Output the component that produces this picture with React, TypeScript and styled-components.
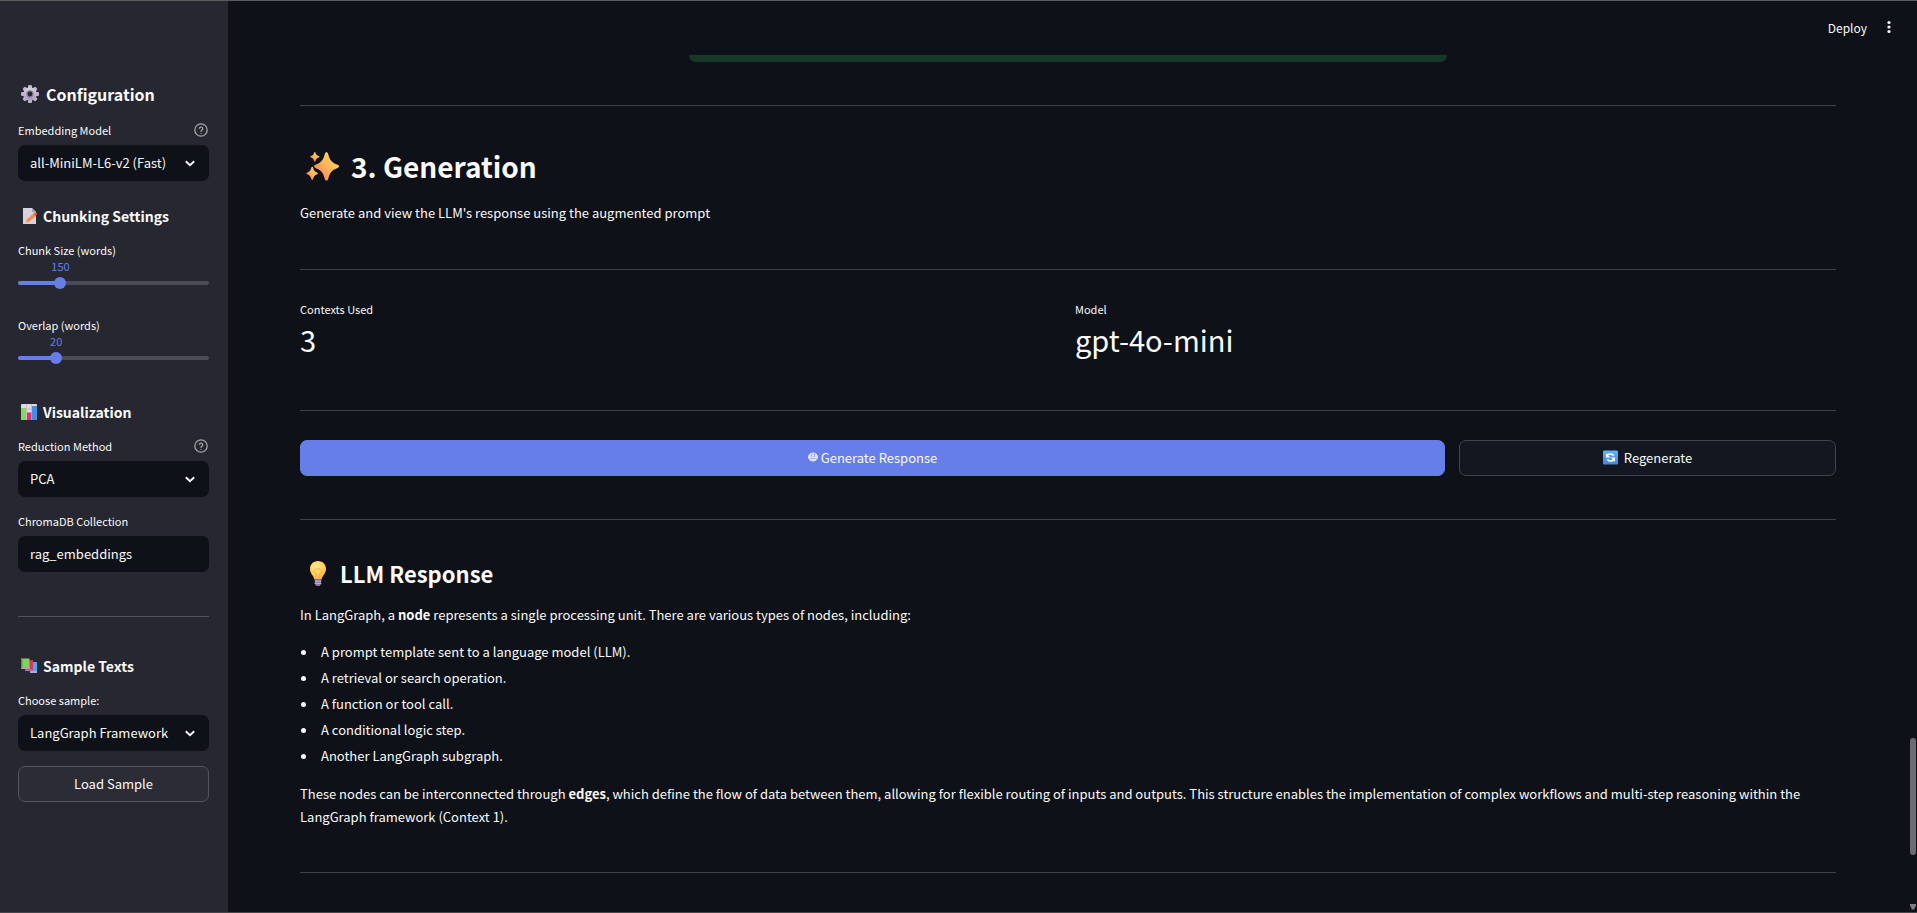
import React, { useState } from "react";
import styled, { createGlobalStyle } from "styled-components";

const GlobalStyle = createGlobalStyle`
  *, *::before, *::after { box-sizing: border-box; }
  body {
    margin: 0;
    background: #0e1117;
    color: #fafafa;
    font-family: "Noto Sans CJK SC", "Noto Sans", sans-serif;
    font-size: 13px;
    line-height: 23px;
  }
  button, input, select { font: inherit; color: inherit; }
  h1, h2, h3, p, ul { margin: 0; }
`;

const Page = styled.div`
  position: relative;
  display: flex;
  height: 100vh;
  overflow: hidden;
  border-top: 1px solid #5a5c5d;
  border-bottom: 1px solid #45454c;
`;

const Sidebar = styled.aside`
  flex: 0 0 228px;
  padding: 73px 19px 0 18px;
  background: #262730;
`;

const Main = styled.main`
  flex: 1;
  min-width: 0;
  display: flex;
  flex-direction: column;
`;

const Header = styled.header`
  flex: 0 0 54px;
  display: flex;
  justify-content: flex-end;
  align-items: center;
  gap: 17px;
  padding: 0 23px 2px 0;
`;

const BarButton = styled.button`
  display: flex;
  align-items: center;
  padding: 0;
  border: 0;
  background: none;
  font-size: 12px;
`;

const Content = styled.div`
  flex: 1;
  min-height: 0;
  padding: 0 81px 0 72px;
`;

const StatusEnd = styled.div`
  width: 758px;
  max-width: 100%;
  height: 7px;
  margin: 0 auto;
  border-radius: 0 0 7px 7px;
  background: #173928;
`;

const Divider = styled.hr<{ $top?: number; $bottom?: number }>`
  height: 1px;
  margin: ${(p) => p.$top ?? 43}px 0 ${(p) => p.$bottom ?? 29}px;
  border: 0;
  background: #3e4146;
`;

const SideDivider = styled(Divider)`
  background: #51525b;
`;

const Title = styled.h2`
  display: flex;
  align-items: center;
  gap: 12px;
  padding-left: 5px;
  font-size: 28px;
  font-weight: 600;
  line-height: 44px;
`;

const Subtitle = styled.h3`
  display: flex;
  align-items: center;
  gap: 9px;
  padding-left: 4px;
  font-size: 22px;
  font-weight: 600;
  line-height: 33px;
`;

const SideTitle = styled.h2<{ $large?: boolean }>`
  display: flex;
  align-items: center;
  gap: ${(p) => (p.$large ? 6 : 5)}px;
  margin-bottom: 5px;
  padding-left: 2px;
  font-size: ${(p) => (p.$large ? 16 : 14)}px;
  font-weight: 600;
  line-height: ${(p) => (p.$large ? 40 : 36)}px;
`;

const Intro = styled.p`
  margin-top: 13px;
`;

const Columns = styled.div`
  display: flex;
  gap: 14px;
`;

const Metric = styled.dl`
  flex: 1;
  margin: 0;
`;

const MetricLabel = styled.dt`
  font-size: 11px;
  line-height: 20px;
`;

const MetricValue = styled.dd`
  margin: 0;
  font-size: 29px;
  line-height: 40px;
`;

const Action = styled.button<{ $primary?: boolean; $share?: number }>`
  flex: ${(p) => (p.$share ? `1 1 calc(${p.$share}% - 14px)` : "none")};
  display: flex;
  justify-content: center;
  align-items: center;
  gap: ${(p) => (p.$primary ? 3 : 6)}px;
  width: 100%;
  height: 36px;
  padding: 0 0 2px;
  border: 1px solid ${(p) => (p.$primary ? "#667eea" : "#41444c")};
  border-radius: 7px;
  background: ${(p) => (p.$primary ? "#667eea" : "#13171f")};
`;

const SideAction = styled(Action)`
  border-color: #53545d;
  background: #2b2c36;
`;

const Bullets = styled.ul`
  padding: 0;
  margin: 13px 0;
  list-style: none;

  li {
    display: flex;
    align-items: center;
    gap: 15px;
    line-height: 26px;
  }
  li::before {
    content: "";
    width: 5px;
    height: 5px;
    margin-left: 1px;
    border-radius: 50%;
    background: #fafafa;
  }
`;

const Field = styled.div<{ $after?: number }>`
  margin-bottom: ${(p) => p.$after ?? 13}px;
`;

const LabelRow = styled.div<{ $compact?: boolean }>`
  display: flex;
  justify-content: space-between;
  align-items: center;
  height: ${(p) => (p.$compact ? 22 : 26)}px;
  padding-bottom: ${(p) => (p.$compact ? 0 : 4)}px;
  font-size: 11px;
  line-height: 22px;
`;

const HelpButton = styled.button`
  display: flex;
  padding: 0 1px 0 0;
  border: 0;
  background: none;
`;

const SelectBox = styled.div`
  display: grid;
  align-items: center;

  select, svg { grid-area: 1 / 1; }
  svg { justify-self: end; margin-right: 14px; pointer-events: none; }
`;

const Select = styled.select`
  appearance: none;
  width: 100%;
  height: 36px;
  padding: 0 30px 2px 12px;
  border: 0;
  border-radius: 7px;
  background: #0e1117;
`;

const TextInput = styled.input`
  width: 100%;
  height: 36px;
  padding: 0 12px 2px;
  border: 0;
  border-radius: 7px;
  background: #0e1117;
`;

const SliderValue = styled.output`
  display: block;
  width: max-content;
  height: 12px;
  transform: translateX(-50%);
  color: #667eea;
  font-size: 11px;
  line-height: 10px;
`;

const Rail = styled.div`
  display: grid;
  align-items: center;
  height: 12px;
  margin-top: 4px;

  > * { grid-area: 1 / 1; }
`;

const RailLine = styled.div`
  height: 4px;
  border-radius: 2px;
  background: #4b4c57;
  overflow: hidden;
`;

const RailFill = styled.div`
  height: 100%;
  background: #667eea;
`;

const Range = styled.input`
  appearance: none;
  width: calc(100% + 12px);
  height: 12px;
  margin: 0 -6px;
  background: none;

  &::-webkit-slider-thumb {
    appearance: none;
    width: 12px;
    height: 12px;
    border-radius: 50%;
    background: #667eea;
  }
`;

const ScrollThumb = styled.div`
  position: absolute;
  right: 1px;
  bottom: 57px;
  width: 6px;
  height: 117px;
  border-radius: 3px;
  background: #6b6c70;
`;

const ScrollArrow = styled.svg`
  position: absolute;
  right: 1px;
  bottom: 2px;
`;

const HelpIcon = () => (
  <svg width="14" height="14" viewBox="0 0 24 24" fill="none" stroke="#a3a4a9" strokeWidth="2.2" strokeLinecap="round" strokeLinejoin="round">
    <circle cx="12" cy="12" r="10.6" />
    <path d="M9.1 9a3 3 0 0 1 5.8 1c0 2-2.9 2.6-2.9 4.2M12 17.6v.1" />
  </svg>
);

const Chevron = () => (
  <svg width="10" height="7" viewBox="0 0 10 7" fill="none" stroke="#fafafa" strokeWidth="1.9">
    <path d="M.8 1.2 5 5.2 9.2 1.2" />
  </svg>
);

const Dots = () => (
  <svg width="10" height="14" viewBox="0 0 10 14" fill="#fafafa">
    <circle cx="5" cy="2.5" r="1.6" />
    <circle cx="5" cy="7" r="1.6" />
    <circle cx="5" cy="11.5" r="1.6" />
  </svg>
);

const Gear = () => (
  <svg width="20" height="20" viewBox="0 0 20 20">
    <defs>
      <linearGradient id="gear" x1="0" y1="0" x2="0" y2="1">
        <stop offset="0" stopColor="#d9d5e0" />
        <stop offset="1" stopColor="#a99bbd" />
      </linearGradient>
    </defs>
    <g fill="url(#gear)">
      {[0, 45, 90, 135].map((a) => (
        <rect key={a} x="8" y="1" width="4" height="18" rx="1.3" fill="#c0b6cd" transform={`rotate(${a} 10 10)`} />
      ))}
      <circle cx="10" cy="10" r="6.8" />
    </g>
    <circle cx="10" cy="10" r="3.7" fill="#8d829e" />
    <circle cx="10" cy="10" r="2.4" fill="#262730" />
  </svg>
);

const Memo = () => (
  <svg width="18" height="18" viewBox="0 0 18 18">
    <path d="M3 1h9l4 4v12H3z" fill="#d8d2df" />
    <path d="M12 1v4h4z" fill="#aaa0b5" />
    <path d="m6.2 13 7-6.2 2.200 2.600L8 15.600l-2.600.7z" fill="#f9884c" />
    <path d="m13.200 6.800 1.600-1.200c1.300-.7 2.800 1.100 1.900 2.200l-1.300 1.600z" fill="#f4593f" />
    <path d="m6.200 13 1.800 2.600-3 .9z" fill="#ffc07b" />
  </svg>
);

const Chart = () => (
  <svg width="18" height="18" viewBox="0 0 18 18">
    <rect x="1" y="1" width="16" height="16" rx="1" fill="#ded7e5" />
    <path d="M6.5 1v16M11.5 1v16M1 6h16M1 11h16" stroke="#bdb3c8" strokeWidth=".7" />
    <path d="M1 5h5v12H2a1 1 0 0 1-1-1z" fill="#86d957" />
    <path d="M7 9.5h4.400V17H7z" fill="#e52c74" />
    <path d="M12 3h5v13a1 1 0 0 1-1 1h-4z" fill="#3f90e4" />
  </svg>
);

const Books = () => (
  <svg width="18" height="18" viewBox="0 0 18 18">
    <path d="M11 5h6v11h-7z" fill="#3cadf1" />
    <path d="M10 14h7v2h-7z" fill="#a6a9ee" />
    <path d="M7 3.5 13 3v11H6z" fill="#e42f62" />
    <path d="M5 12.300h8v1.800H5z" fill="#b76a9e" />
    <path d="M1 1.500h8.500V12H1z" fill="#7ed25d" />
    <path d="M1 1.500h1.400V12H1z" fill="#4f9b45" />
    <path d="M1.400 10.300h8.100V12H1.400z" fill="#a9a5bb" />
  </svg>
);

const Sparkles = () => (
  <svg width="34" height="34" viewBox="0 0 34 34">
    <defs>
      <linearGradient id="spark" x1="1" y1="0" x2="0" y2="1">
        <stop offset="0" stopColor="#ffe05e" />
        <stop offset=".5" stopColor="#ffb65a" />
        <stop offset="1" stopColor="#f5695e" />
      </linearGradient>
    </defs>
    <g fill="url(#spark)" transform="translate(.5 .8)">
      <path d="M21 2.400c.9 0 1.400.6 1.700 1.700 1.700 6.300 3.300 8.400 9.400 10.900 1.900.8 1.900 2.300 0 3.100-6.100 2.400-7.700 4.500-9.400 11-.6 2.200-2.800 2.200-3.400 0-1.700-6.500-3.300-8.600-9.400-11-1.900-.8-1.900-2.300 0-3.100 6.100-2.500 7.700-4.600 9.400-10.900.3-1.100.8-1.700 1.700-1.700z" />
      <path d="M9.300 2.200c.4 0 .6.300.8.9.6 1.800 1.200 2.400 3 3.100 1 .4 1 1.100 0 1.500-1.800.7-2.400 1.400-3 3.300-.3 1.100-1.300 1.100-1.600 0-.6-1.900-1.200-2.600-3-3.300-1-.4-1-1.100 0-1.500 1.800-.7 2.400-1.300 3-3.100.2-.6.400-.9.800-.9z" />
      <path d="M6.700 17c.5 0 .8.400 1 1.100.8 2.700 1.500 3.500 3.800 4.500 1.200.5 1.200 1.400 0 1.900-2.300 1-3 1.900-3.800 4.500-.4 1.500-1.600 1.500-2 0-.8-2.600-1.500-3.500-3.800-4.500-1.200-.5-1.200-1.400 0-1.900 2.300-1 3-1.800 3.800-4.500.2-.7.500-1.100 1-1.100z" />
    </g>
  </svg>
);

const Bulb = () => (
  <svg width="27" height="27" viewBox="0 0 27 27">
    <defs>
      <radialGradient id="bulb" cx=".4" cy=".3" r=".8">
        <stop offset="0" stopColor="#ffe98c" />
        <stop offset=".6" stopColor="#ffce57" />
        <stop offset="1" stopColor="#f5a94f" />
      </radialGradient>
    </defs>
    <path d="M14 1c4.800 0 8 3.600 8 7.900 0 4.800-3.700 6.300-4.300 10.600h-7.400C9.700 15.200 6 13.700 6 8.900 6 4.600 9.200 1 14 1z" fill="url(#bulb)" />
    <path d="M12.200 19.300v-5.500c-4-2-2-5 1.800-5s5.800 3 1.800 5v5.500" fill="none" stroke="#eea042" strokeWidth=".8" />
    <path d="M10.800 19.500h6.400v4.300l-1.500 2.200h-3.400l-1.500-2.200z" fill="#8b77a4" />
    <path d="M10.800 21h6.400M10.800 23.300h6.400" stroke="#d0c2da" strokeWidth=".9" />
  </svg>
);

const Robot = () => (
  <svg width="10" height="10" viewBox="0 0 10 10">
    <ellipse cx="5" cy="5" rx="4.500" ry="4" fill="#b4bef6" stroke="#eef0ff" />
    <path d="M1.500 3.200h7M1 5.200h8M2.500 7.200h5" stroke="#fff" strokeWidth="1" />
    <path d="M3.500 2v2.500M6.500 2v2.500M3 6.300h4" stroke="#7a8eee" strokeWidth=".7" />
  </svg>
);

const Refresh = () => (
  <svg width="15" height="15" viewBox="0 0 15 15">
    <defs>
      <linearGradient id="refresh" x1="0" y1="0" x2="0" y2="1">
        <stop offset="0" stopColor="#62b2fb" />
        <stop offset="1" stopColor="#3f86e2" />
      </linearGradient>
    </defs>
    <rect width="15" height="14" y=".5" rx="1.200" fill="url(#refresh)" />
    <path d="M4 5.600c1.500-2 5-2.200 6.700 0M11 9.400c-1.500 2-5 2.200-6.700 0" fill="none" stroke="#fff" strokeWidth="1.700" />
    <path d="M3 3.200v4.300h4.300zM12 11.800V7.500H7.700z" fill="#fff" />
  </svg>
);

type SelectFieldProps = { id: string; label: string; options: string[]; help?: boolean; after?: number };

function SelectField({ id, label, options, help, after }: SelectFieldProps) {
  return (
    <Field $after={after}>
      <LabelRow>
        <label htmlFor={id}>{label}</label>
        {help && (
          <HelpButton type="button" aria-label={`Help for ${label}`}>
            <HelpIcon />
          </HelpButton>
        )}
      </LabelRow>
      <SelectBox>
        <Select id={id}>
          {options.map((o) => (
            <option key={o}>{o}</option>
          ))}
        </Select>
        <Chevron />
      </SelectBox>
    </Field>
  );
}

type SliderFieldProps = { id: string; label: string; min: number; max: number; initial: number; after?: number };

function SliderField({ id, label, min, max, initial, after }: SliderFieldProps) {
  const [value, setValue] = useState(initial);
  const share = `${((value - min) / (max - min)) * 100}%`;
  return (
    <Field $after={after}>
      <LabelRow $compact>
        <label htmlFor={id}>{label}</label>
      </LabelRow>
      <SliderValue htmlFor={id} style={{ marginLeft: share }}>
        {value}
      </SliderValue>
      <Rail>
        <RailLine>
          <RailFill style={{ width: share }} />
        </RailLine>
        <Range id={id} type="range" min={min} max={max} value={value} onChange={(e) => setValue(Number(e.target.value))} />
      </Rail>
    </Field>
  );
}

export default function App() {
  return (
    <>
      <GlobalStyle />
      <Page>
        <Sidebar>
          <SideTitle $large>
            <Gear />
            Configuration
          </SideTitle>
          <SelectField id="model" label="Embedding Model" options={["all-MiniLM-L6-v2 (Fast)"]} help after={17} />
          <SideTitle>
            <Memo />
            Chunking Settings
          </SideTitle>
          <SliderField id="size" label="Chunk Size (words)" min={50} max={500} initial={150} after={25} />
          <SliderField id="overlap" label="Overlap (words)" min={0} max={100} initial={20} after={30} />
          <SideTitle>
            <Chart />
            Visualization
          </SideTitle>
          <SelectField id="method" label="Reduction Method" options={["PCA"]} help />
          <Field $after={0}>
            <LabelRow>
              <label htmlFor="collection">ChromaDB Collection</label>
            </LabelRow>
            <TextInput id="collection" defaultValue="rag_embeddings" />
          </Field>
          <SideDivider $top={44} $bottom={31} />
          <SideTitle>
            <Books />
            Sample Texts
          </SideTitle>
          <SelectField id="sample" label="Choose sample:" options={["LangGraph Framework"]} after={15} />
          <SideAction type="button">Load Sample</SideAction>
        </Sidebar>
        <Main>
          <Header>
            <BarButton type="button">Deploy</BarButton>
            <BarButton type="button" aria-label="Main menu">
              <Dots />
            </BarButton>
          </Header>
          <Content>
            <StatusEnd />
            <Divider $bottom={38} />
            <Title>
              <Sparkles />
              3. Generation
            </Title>
            <Intro>Generate and view the LLM's response using the augmented prompt</Intro>
            <Divider $top={45} />
            <Columns>
              <Metric>
                <MetricLabel>Contexts Used</MetricLabel>
                <MetricValue>3</MetricValue>
              </Metric>
              <Metric>
                <MetricLabel>Model</MetricLabel>
                <MetricValue>gpt-4o-mini</MetricValue>
              </Metric>
            </Columns>
            <Divider $top={51} />
            <Columns>
              <Action type="button" $primary $share={75}>
                <Robot />
                Generate Response
              </Action>
              <Action type="button" $share={25}>
                <Refresh />
                Regenerate
              </Action>
            </Columns>
            <Divider $bottom={37} />
            <Subtitle>
              <Bulb />
              LLM Response
            </Subtitle>
            <Intro>
              In LangGraph, a <strong>node</strong> represents a single processing unit. There are various types of nodes, including:
            </Intro>
            <Bullets>
              <li>A prompt template sent to a language model (LLM).</li>
              <li>A retrieval or search operation.</li>
              <li>A function or tool call.</li>
              <li>A conditional logic step.</li>
              <li>Another LangGraph subgraph.</li>
            </Bullets>
            <p>
              These nodes can be interconnected through <strong>edges</strong>, which define the flow of data between them, allowing for
              flexible routing of inputs and outputs. This structure enables the implementation of complex workflows and multi-step
              reasoning within the LangGraph framework (Context 1).
            </p>
            <Divider $top={44} />
          </Content>
        </Main>
        <ScrollThumb />
        <ScrollArrow width="6" height="6" viewBox="0 0 6 6">
          <path d="M0 0h6v1.500L4 5.500H2L0 1.500z" fill="#7d7e82" />
        </ScrollArrow>
      </Page>
    </>
  );
}
